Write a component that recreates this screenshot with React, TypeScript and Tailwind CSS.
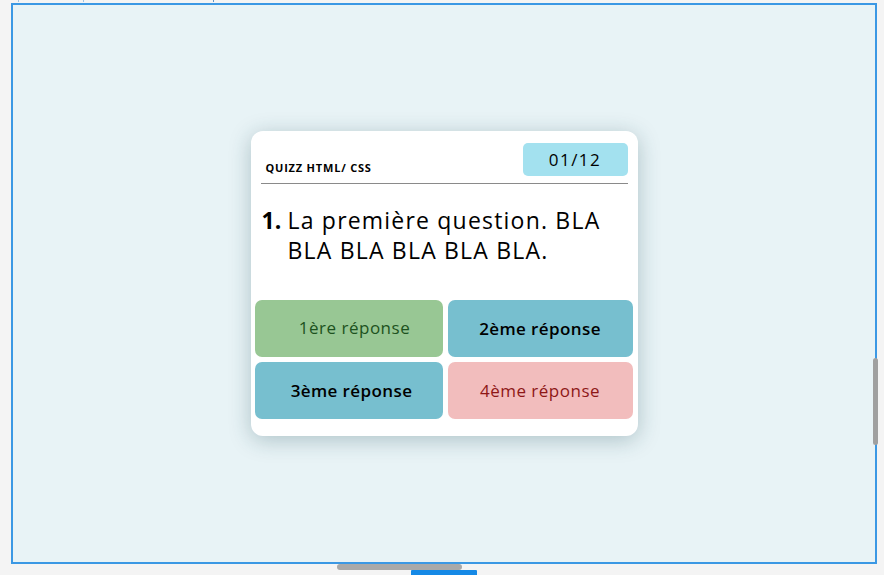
import React from "react";

export default function App() {
  const font = { fontFamily: "'Open Sans', 'Noto Sans', sans-serif" };
  return (
    <div className="relative h-[575px] w-full overflow-hidden bg-[#f4f4f4] pl-[11px] pt-[3px]" style={font}>
      {/* top ticks */}
      <div className="absolute left-[18px] top-0 h-[2px] w-[1px] bg-[#9cc4e6]" />
      <div className="absolute left-[83px] top-0 h-[2px] w-[1px] bg-[#9cc4e6]" />
      <div className="absolute left-[213px] top-0 h-[2px] w-[1px] bg-[#5e95c9]" />

      <div className="flex h-[561px] w-[866px] items-center justify-center border-2 border-[#3b98e4] bg-[#e8f3f6]">
        <div className="flex h-[305px] w-[387px] flex-col rounded-[12px] bg-white shadow-[0_4px_22px_rgba(20,70,80,0.28)]">
          <div className="mx-[10px] mt-[12px] flex items-end justify-between border-b border-[#8a8a8a] pb-[7px]">
            <span className="pb-[3px] pl-[5px] text-[11px] font-bold leading-none tracking-[0.8px] text-black">QUIZZ HTML/ CSS</span>
            <span className="flex h-[33px] w-[105px] items-center justify-center rounded-[5px] bg-[#a3e1ef] text-[17px] tracking-[1.5px] text-black">01/12</span>
          </div>
          <div className="mt-[21px] flex pl-[11px] text-[23px] font-medium leading-[30px] tracking-[1.2px] text-black">
            <span className="w-[26px] font-bold tracking-normal">1.</span>
            <span className="w-[340px]">La première question. BLA BLA BLA BLA BLA BLA.</span>
          </div>
          <div className="mt-[35px] grid grid-cols-[188px_185px] gap-[5px] pl-[4px]">
            <div className="flex h-[57px] items-center justify-center rounded-[7px] bg-[#98c794] pl-[12px] pb-[2px] text-[17px] font-medium tracking-[0.5px] text-[#1d5220]">1ère réponse</div>
            <div className="flex h-[57px] items-center justify-center rounded-[7px] bg-[#77bfcf] text-[17px] font-semibold tracking-[0.4px] text-black">2ème réponse</div>
            <div className="flex h-[57px] items-center justify-center rounded-[7px] bg-[#77bfcf] pl-[6px] text-[17px] font-semibold tracking-[0.4px] text-black">3ème réponse</div>
            <div className="flex h-[57px] items-center justify-center rounded-[7px] bg-[#f2bdbd] text-[17px] font-medium tracking-[0.5px] text-[#8e1717]">4ème réponse</div>
          </div>
        </div>
      </div>

      {/* scrollbars */}
      <div className="absolute left-[337px] top-[564px] h-[6px] w-[125px] rounded-full bg-[#a9a9a9]" />
      <div className="absolute left-[411px] top-[570px] h-[5px] w-[66px] rounded-t-[1px] bg-[#1589e6]" />
      <div className="absolute left-[873px] top-[358px] h-[87px] w-[5px] rounded-full bg-[#a0a0a0]" />
    </div>
  );
}
